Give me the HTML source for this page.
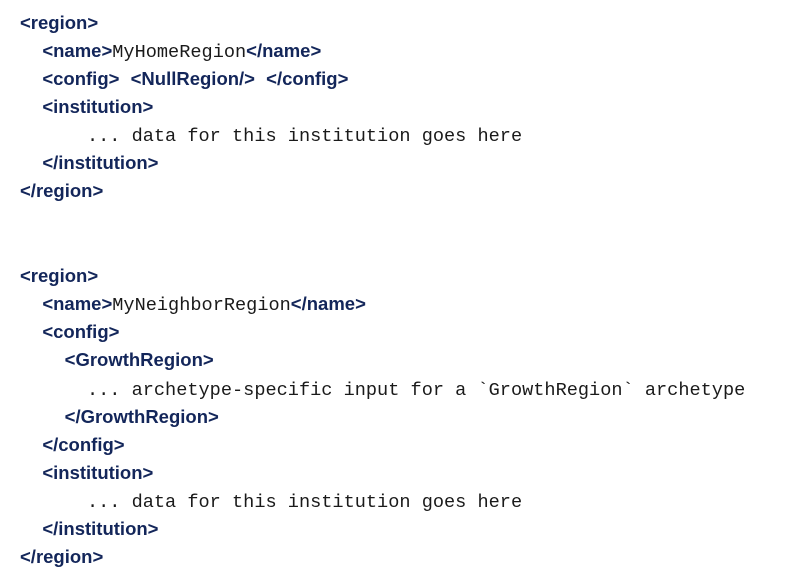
<!DOCTYPE html>
<html><head><style>
html,body{margin:0;background:#fff;width:794px;height:586px;overflow:hidden}
.c{position:absolute;left:20px;top:10.5px;font-family:"Liberation Mono",monospace;font-size:18.6px;color:#1a1a1a}
.c div{height:28.16px;line-height:28px;white-space:pre}
b{font-family:"Liberation Sans",sans-serif;font-weight:bold;color:#13265a;font-size:18.5px;line-height:1}
</style></head><body>
<div class="c">
<div><b>&lt;region&gt;</b></div>
<div>  <b>&lt;name&gt;</b>MyHomeRegion<b>&lt;/name&gt;</b></div>
<div>  <b>&lt;config&gt;</b> <b>&lt;NullRegion/&gt;</b> <b>&lt;/config&gt;</b></div>
<div>  <b>&lt;institution&gt;</b></div>
<div>      ... data for this institution goes here</div>
<div>  <b>&lt;/institution&gt;</b></div>
<div><b>&lt;/region&gt;</b></div>
<div> </div>
<div> </div>
<div><b>&lt;region&gt;</b></div>
<div>  <b>&lt;name&gt;</b>MyNeighborRegion<b>&lt;/name&gt;</b></div>
<div>  <b>&lt;config&gt;</b></div>
<div>    <b>&lt;GrowthRegion&gt;</b></div>
<div>      ... archetype-specific input for a `GrowthRegion` archetype</div>
<div>    <b>&lt;/GrowthRegion&gt;</b></div>
<div>  <b>&lt;/config&gt;</b></div>
<div>  <b>&lt;institution&gt;</b></div>
<div>      ... data for this institution goes here</div>
<div>  <b>&lt;/institution&gt;</b></div>
<div><b>&lt;/region&gt;</b></div>
</div>
</body></html>
